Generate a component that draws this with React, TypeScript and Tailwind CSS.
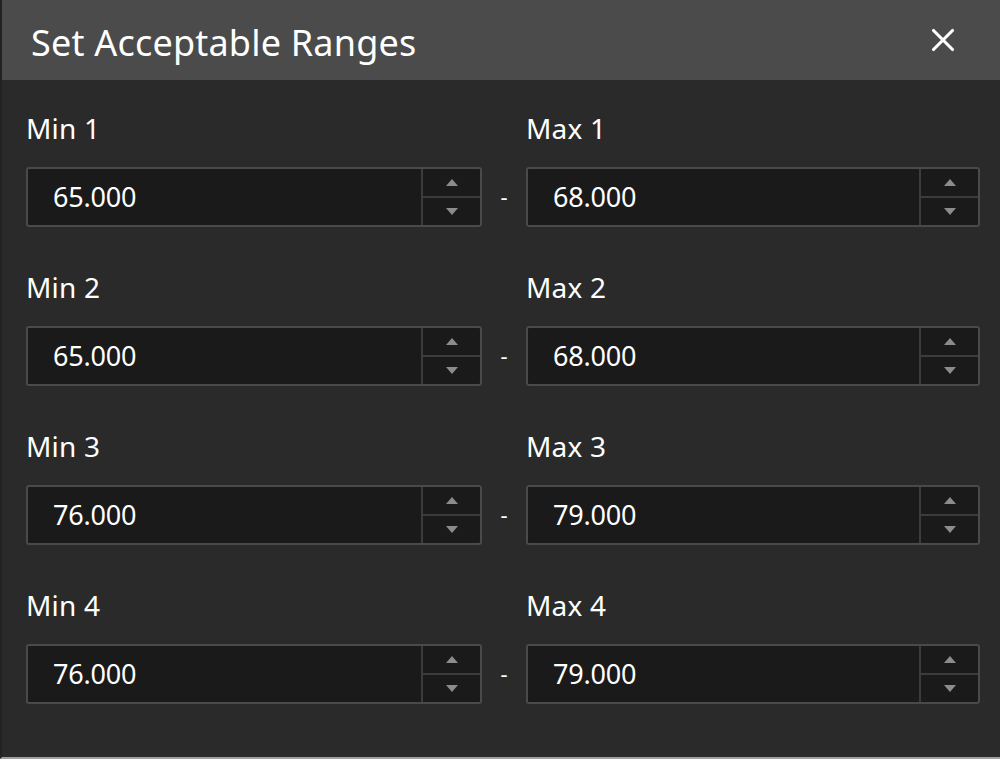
import { X } from 'lucide-react';

const rows = [
  { n: 1, min: '65.000', max: '68.000' },
  { n: 2, min: '65.000', max: '68.000' },
  { n: 3, min: '76.000', max: '79.000' },
  { n: 4, min: '76.000', max: '79.000' },
];

function Spinner() {
  return (
    <div className="flex w-[59px] flex-col border-l-2 border-[#3c3c3c]">
      <button className="flex flex-1 items-center justify-center border-b-2 border-[#3c3c3c]">
        <span className="h-0 w-0 border-x-[6px] border-b-[7px] border-x-transparent border-b-[#8c8c8c]" />
      </button>
      <button className="flex flex-1 items-center justify-center">
        <span className="h-0 w-0 border-x-[6px] border-t-[7px] border-x-transparent border-t-[#8c8c8c]" />
      </button>
    </div>
  );
}

function NumberBox({ value }: { value: string }) {
  return (
    <div className="flex h-[60px] rounded-[3px] border-2 border-[#4a4a4a] bg-[#1a1a1a]">
      <div className="flex flex-1 items-center pl-[25px] text-[27px] tracking-[-0.2px] text-white">{value}</div>
      <Spinner />
    </div>
  );
}

export default function App() {
  return (
    <div
      className="flex h-[759px] w-[1000px] flex-col border-b-2 border-l-2 border-b-[#a0a0a0] border-l-[#222] bg-[#2a2a2a]"
      style={{ fontFamily: '"Noto Sans", "Open Sans", sans-serif' }}
    >
      <div className="flex h-[80px] shrink-0 items-center justify-between bg-[#4b4b4b] pb-[1px] pl-[29px] pr-[38px]">
        <h1 className="pt-[6px] text-[36px] tracking-[0.2px] text-white">Set Acceptable Ranges</h1>
        <X className="h-[38px] w-[38px] text-white" strokeWidth={2} />
      </div>
      <div className="flex flex-col gap-[40px] pl-[24px] pt-[28px]">
        {rows.map((r) => (
          <div key={r.n} className="grid grid-cols-[456px_44px_454px]">
            <div className="flex h-[40px] items-center text-[28px] tracking-[0.2px] text-white">Min {r.n}</div>
            <div />
            <div className="flex h-[40px] items-center text-[28px] tracking-[0.2px] text-white">Max {r.n}</div>
            <div className="col-span-3 h-[19px]" />
            <NumberBox value={r.min} />
            <div className="flex items-center justify-center pb-[2px] text-[22px] text-white">-</div>
            <NumberBox value={r.max} />
          </div>
        ))}
      </div>
    </div>
  );
}
